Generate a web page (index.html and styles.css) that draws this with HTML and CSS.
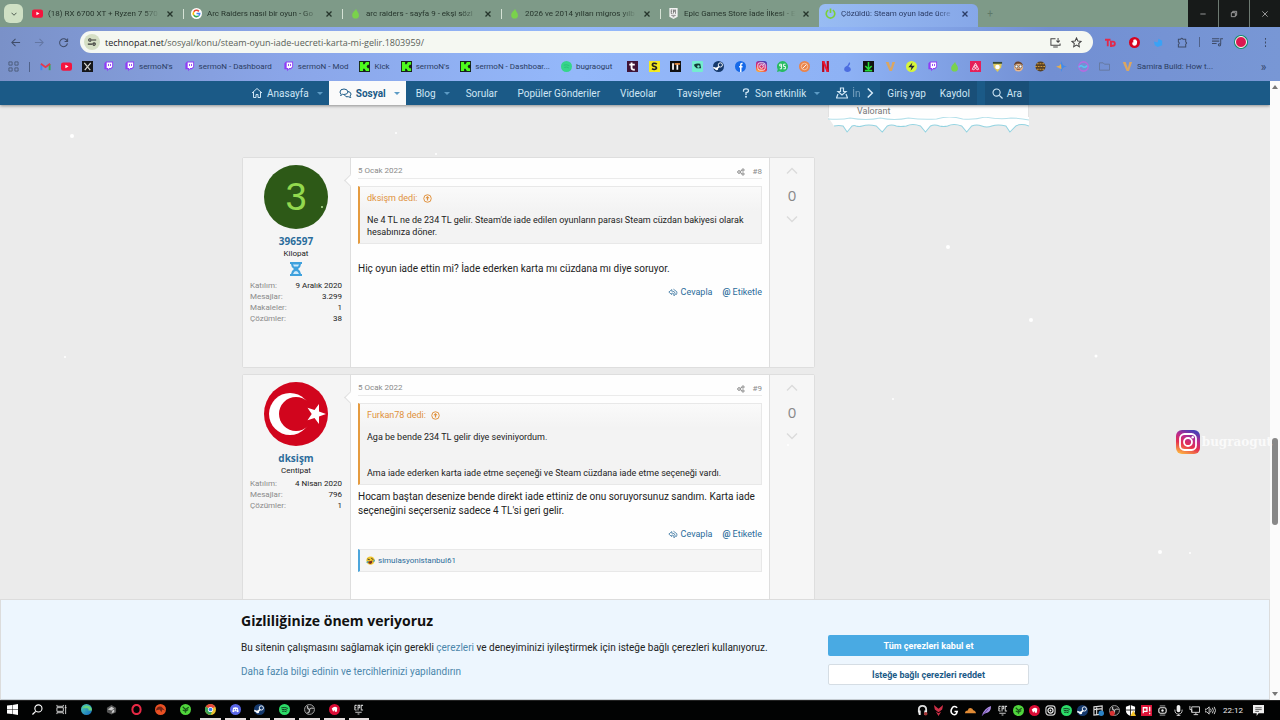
FILE: index.html
```html
<!DOCTYPE html>
<html lang="tr">
<head>
  <meta charset="UTF-8" />
  <meta name="viewport" content="width=device-width, initial-scale=1.0"/>
  <title>Çözüldü: Steam oyun iade ücreti karta mı gelir?</title>
  <link rel="stylesheet" href="styles.css">
</head>
<body>
  <svg class="sprite" aria-hidden="true">
    <defs>
      <linearGradient id="ig" x1="0.2" y1="1" x2="0.6" y2="0">
        <stop offset="0" stop-color="#fdb740"/><stop offset="0.4" stop-color="#e5304f"/><stop offset="0.7" stop-color="#b92a8f"/><stop offset="1" stop-color="#4a3fb5"/>
      </linearGradient>
      <linearGradient id="edgeFill" x1="0" y1="0" x2="1" y2="1">
        <stop offset="0" stop-color="#4fd0b5"/><stop offset="1" stop-color="#1268c4"/>
      </linearGradient>
    </defs>
    <symbol id="close" viewBox="0 0 12 12"><path d="M3 3l6 6M9 3l-6 6" fill="none" stroke="currentColor" stroke-width="1.6"/></symbol>
    <symbol id="youtube" viewBox="0 0 12 12"><rect y="1.5" width="12" height="9" rx="2.4" fill="#f5143d"/><path d="M4.8 4v4l3.4-2z" fill="#fff"/></symbol>
    <symbol id="google" viewBox="0 0 12 12"><circle cx="6" cy="6" r="6" fill="#fff"/><g fill="none" stroke-width="1.7"><path d="M8.6 3.7A3.5 3.5 0 0 0 3 4.2" stroke="#ea4335"/><path d="M3 4.2a3.5 3.5 0 0 0 0 3.6" stroke="#fbbc05"/><path d="M3 7.8a3.5 3.5 0 0 0 5.4.6" stroke="#34a853"/><path d="M8.4 8.4A3.4 3.4 0 0 0 9.5 6H6" stroke="#4285f4"/></g></symbol>
    <symbol id="drop" viewBox="0 0 12 12"><path d="M6.6.8C5.8 3 2.4 4.6 2.4 7.8a3.7 3.7 0 0 0 7.4 0C9.800 5 7.200 3.800 6.600.8z" fill="#7ad24c"/></symbol>
    <symbol id="epic" viewBox="0 0 12 12"><path d="M1.500 0h9v9.500L6 12 1.500 9.500z" fill="#f2f2f2"/><path d="M3.500 2v4M3.500 2h1.300M3.500 4h1M3.500 6h1.300M6 6V2h1v2H6M8.700 2H8.200v4h.5M3.500 8h5M5 9.500h2" fill="none" stroke="#555" stroke-width=".7"/></symbol>
    <symbol id="epic-dark" viewBox="0 0 12 12"><path d="M2 1.500v5M2 1.500h2M2 4h1.500M2 6.500h2M5.500 7V1.500h1.800v2.700H5.500M11 1.500H9v5h2M2.500 9h7M5 11h2" fill="none" stroke="#ccc" stroke-width="1.100"/></symbol>
    <symbol id="power" viewBox="0 0 12 12"><path d="M3.500 2.300a4.700 4.700 0 1 0 5 0M6 .5v5" fill="none" stroke="#7ad03a" stroke-width="1.800"/></symbol>
    <symbol id="twitch" viewBox="0 0 12 12"><path d="M1.500 2.500L3.500.5H11v6L8.500 9H6.500L4.500 11.200V9h-3z" fill="#8f3df5"/><path d="M4 1.700h6v4.500L8.500 7.700H6.800L5.500 9V7.700H4z" fill="#fff"/><path d="M6 3.200v2.300M8.200 3.200v2.300" stroke="#8f3df5"/></symbol>
    <symbol id="kick" viewBox="0 0 12 12"><rect width="12" height="12" fill="#16201a"/><path d="M1 1h3.500v2.500H6L7.500 1H11v3H9.500L8.300 6l1.200 2H11v3H7.500L6 8.500H4.500V11H1z" fill="#4dfb1e"/></symbol>
    <symbol id="gmail" viewBox="0 0 12 12"><path d="M1.500 10V3.500" stroke="#4285f4" stroke-width="2"/><path d="M10.500 10V3.500" stroke="#34a853" stroke-width="2"/><path d="M1 3l5 3.700L11 3" fill="none" stroke="#e5384a" stroke-width="2"/></symbol>
    <symbol id="xapp" viewBox="0 0 12 12"><rect width="12" height="12" fill="#15161a"/><path d="M2.500 2l6.500 8M9.500 2L3 10" stroke="#ddd" stroke-width="1.300"/><path d="M3.500 2l6 8" stroke="#886" stroke-width=".5"/></symbol>
    <symbol id="steam" viewBox="0 0 12 12"><circle cx="6" cy="6" r="6" fill="#15396d"/><path d="M.3 7L4 8.600 7.500 5" fill="none" stroke="#fff" stroke-width="1.800"/><circle cx="8" cy="4.300" r="2.300" fill="#15396d" stroke="#fff"/><circle cx="4" cy="8.600" r="1.600" fill="#fff"/></symbol>
    <symbol id="facebook" viewBox="0 0 12 12"><circle cx="6" cy="6" r="6" fill="#1669e8"/><path d="M8.300 2.700H7.500q-1.200 0-1.200 1.300v8M4.500 6.300h3.700" fill="none" stroke="#fff" stroke-width="1.600"/></symbol>
    <symbol id="instagram" viewBox="0 0 24 24"><rect width="24" height="24" rx="6" fill="url(#ig)"/><rect x="4" y="4" width="16" height="16" rx="4.500" fill="none" stroke="#fff" stroke-width="1.800"/><circle cx="12" cy="12" r="4" fill="none" stroke="#fff" stroke-width="1.800"/><circle cx="16.700" cy="7.300" r="1.200" fill="#fff"/></symbol>
    <symbol id="spotify" viewBox="0 0 12 12"><circle cx="6" cy="6" r="6" fill="#2cdc68"/><path d="M2.500 4.200q4-1.200 7.200.6M3 6.200q3.400-1 6 .6M3.400 8q2.600-.7 4.800.5" fill="none" stroke="#12331e"/></symbol>
    <symbol id="vee" viewBox="0 0 12 12"><path d="M.8 1H4l2.400 7L8 1h3L7.600 11H5z" fill="#dba661"/></symbol>
    <symbol id="folder" viewBox="0 0 12 12"><path d="M.5 10V2h4L6 3.500h5.500V10z" fill="none" stroke="#65779c"/></symbol>
    <symbol id="netflix" viewBox="0 0 12 12"><path d="M3.500 12V0M8.500 12V0" stroke="#b5081c" stroke-width="2.400"/><path d="M2.300 0h2.400l5 12H7.300z" fill="#ef1430"/></symbol>
    <symbol id="stop" viewBox="0 0 12 12"><circle cx="6" cy="6" r="6" fill="#d8031f"/><path d="M3.500 6q0 3.500 2.500 3.500T8.800 6V4H8V3H7V2.500H6V3H4.700v3z" fill="#fff"/></symbol>
    <symbol id="amd" viewBox="0 0 12 12"><circle cx="6" cy="6" r="6" fill="#db0b35"/><path d="M3 5q3-3.500 6-1l-.5 4.500H6.500L6 6.500 4.500 8.500z" fill="#fff"/></symbol>
    <symbol id="razer" viewBox="0 0 12 12"><circle cx="6" cy="6" r="6" fill="#50d63c"/><path d="M6 9.500V6L3 3M6 6l3.500-2.500M3 6.500L6 8l3-2" fill="none" stroke="#185318" stroke-width="1.300"/></symbol>
    <symbol id="obs" viewBox="0 0 12 12"><circle cx="6" cy="6" r="5.400" fill="#171717" stroke="#aaa"/><path d="M6 6Q3 5 4 2M6 6q2-2.600 4.500-1M6 6q.500 3-2.500 4" fill="none" stroke="#bbb" stroke-width="1.200"/></symbol>
    <symbol id="home" viewBox="0 0 24 24"><path d="M2 12L12 3l10 9M5 10v11h5v-6h4v6h5V10" fill="none" stroke="currentColor" stroke-width="2"/></symbol>
    <symbol id="chat" viewBox="0 0 26 22"><path d="M3 16q2-2 1-3-2-2-2-4 0-6 8-6 7 0 8 6-1 5-8 5-2 0-3-.5Q5 16 3 16zM18 8q6 1 6 5 0 2-2 4 0 2 1.500 3-3 0-4.500-1.500Q13 20 11 15" fill="none" stroke="currentColor" stroke-width="2"/></symbol>
    <symbol id="search" viewBox="0 0 12 12"><circle cx="5" cy="5" r="3.900" fill="none" stroke="currentColor" stroke-width="1.200"/><path d="M8 8l3.500 3.500" stroke="currentColor" stroke-width="1.400"/></symbol>
    <symbol id="up" viewBox="0 0 12 12"><path d="M1 8.500l5-5 5 5" fill="none" stroke="currentColor" stroke-width="1.500"/></symbol>
    <symbol id="down" viewBox="0 0 12 12"><path d="M1 3.500l5 5 5-5" fill="none" stroke="currentColor" stroke-width="1.500"/></symbol>
    <symbol id="jump" viewBox="0 0 12 12"><circle cx="6" cy="6" r="5" fill="none" stroke="currentColor" stroke-width="1.300"/><path d="M6 2.800l2.800 3H6.800v2.800H5.200V5.800H3.200z" fill="currentColor"/></symbol>
    <symbol id="share" viewBox="0 0 12 12"><g fill="none" stroke="currentColor" stroke-width="1.500"><circle cx="3" cy="6" r="2"/><circle cx="9" cy="3" r="1.700"/><circle cx="9" cy="9" r="1.700"/><path d="M4.700 5l2.700-1.300M4.700 7l2.700 1.300"/></g></symbol>
    <symbol id="reply" viewBox="0 0 24 20"><path d="M9 3L2 9l7 6v-3.500h2q4 0 3.500 6.500 3.500-2.500 2.500-6-1-5-6-5H9zM13 2l8 6q2 3-2 8" fill="none" stroke="currentColor" stroke-width="1.800"/></symbol>
  </svg>

  <header class="browser">
    <div class="tab-strip">
      <button class="tab-search" aria-label="Sekme ara"><svg viewBox="0 0 12 12"><use href="#down"/></svg></button>
      <nav class="tabs">
        <div class="tab"><svg><use href="#youtube"/></svg><span>(18) RX 6700 XT + Ryzen 7 570</span><button aria-label="Kapat"><svg><use href="#close"/></svg></button></div>
        <div class="tab"><svg><use href="#google"/></svg><span>Arc Raiders nasıl bir oyun - Go</span><button aria-label="Kapat"><svg><use href="#close"/></svg></button></div>
        <div class="tab"><svg><use href="#drop"/></svg><span>arc raiders - sayfa 9 - ekşi sözl</span><button aria-label="Kapat"><svg><use href="#close"/></svg></button></div>
        <div class="tab"><svg><use href="#drop"/></svg><span>2026 ve 2014 yılları migros yılb</span><button aria-label="Kapat"><svg><use href="#close"/></svg></button></div>
        <div class="tab"><svg><use href="#epic"/></svg><span>Epic Games Store İade İlkesi - E</span><button aria-label="Kapat"><svg><use href="#close"/></svg></button></div>
        <div class="tab active"><svg><use href="#power"/></svg><span>Çözüldü: Steam oyun iade ücre</span><button aria-label="Kapat"><svg><use href="#close"/></svg></button></div>
        <button class="new-tab" aria-label="Yeni sekme">+</button>
      </nav>
      <div class="window-buttons">
        <button aria-label="Simge durumuna küçült"><svg viewBox="0 0 12 12"><path d="M2 6h8"/></svg></button>
        <button aria-label="Geri yükle"><svg viewBox="0 0 12 12"><path d="M2 4h6v6H2zM4 4V2h6v6H8"/></svg></button>
        <button aria-label="Pencereyi kapat"><svg viewBox="0 0 12 12"><path d="M2 2l8 8M10 2l-8 8"/></svg></button>
      </div>
    </div>

    <div class="toolbar">
      <button class="tool" aria-label="Geri"><svg viewBox="0 0 12 12"><path d="M11 6H2M6 2L2 6l4 4"/></svg></button>
      <button class="tool faded" aria-label="İleri"><svg viewBox="0 0 12 12"><path d="M1 6h9M6 2l4 4-4 4"/></svg></button>
      <button class="tool" aria-label="Yenile"><svg viewBox="0 0 12 12"><path d="M10 4.500A4.300 4.300 0 1 0 10.300 7M10.500 1.500v3.300H7.200"/></svg></button>
      <div class="address">
        <button class="site-info" aria-label="Site bilgileri"><svg viewBox="0 0 12 12"><circle cx="3.500" cy="3.500" r="1.500"/><path d="M6 3.500h5M1 8.500h5"/><circle cx="8.500" cy="8.500" r="1.500"/></svg></button>
        <a class="url" href="#"><b>technopat.net</b>/sosyal/konu/steam-oyun-iade-uecreti-karta-mi-gelir.1803959/</a>
        <button class="tool" aria-label="Yükle"><svg viewBox="0 0 12 12"><path d="M6 2H1v7h10V7M3.500 11h5M8.800 1v4.500M7 4l1.800 1.800L10.700 4"/></svg></button>
        <button class="tool" aria-label="Yer işareti"><svg viewBox="0 0 12 12"><path d="M6 1l1.500 3.300 3.500.4-2.600 2.400.7 3.600L6 8.900l-3.100 1.800.7-3.600L1 4.700l3.500-.4z"/></svg></button>
      </div>
      <div class="extensions">
        <button class="tool" aria-label="Technopat"><svg viewBox="0 0 12 12"><path d="M0 3h6M3 3v7M6.500 11V5h2a2.200 2.200 0 0 1 0 4.500h-2" stroke="#e2294a" stroke-width="2"/></svg></button>
        <button class="tool" aria-label="Engelleyici"><svg><use href="#stop" stroke="none"/></svg></button>
        <button class="tool" aria-label="Eklenti"><svg viewBox="0 0 12 12"><path d="M1 5l4 1 1-4 4 2v5l-5 2-3-2z" fill="#3aa2f5" stroke="none"/></svg></button>
        <button class="tool" aria-label="Uzantılar"><svg viewBox="0 0 12 12"><path d="M1.500 2.500H4q1.200-2.500 2.500 0H9.500v3q2 1 0 2.300v3h-8V8q2-1.300 0-2.500z"/></svg></button>
        <span class="divider"></span>
        <button class="tool" aria-label="Medya"><svg viewBox="0 0 12 12"><path d="M0 2h8M0 4.500h8M0 7h5M9.500 8V2H12"/><circle cx="8.200" cy="8.500" r="1.200"/></svg></button>
        <button class="profile" aria-label="Profil"></button>
        <button class="tool" aria-label="Menü"><svg viewBox="0 0 12 12"><path d="M6 1v2M6 5v2M6 9v2"/></svg></button>
      </div>
    </div>

    <nav class="bookmarks">
      <a href="#" aria-label="Uygulamalar"><svg viewBox="0 0 12 12"><path d="M1 1h3.500v3.500H1zM7.500 1H11v3.500H7.500zM1 7.500h3.500V11H1zM7.500 7.500H11V11H7.500z" fill="none" stroke="#4c5c79"/></svg></a>
      <span class="divider"></span>
      <a href="#" aria-label="Gmail"><svg><use href="#gmail"/></svg></a>
      <a href="#" aria-label="YouTube"><svg><use href="#youtube"/></svg></a>
      <a href="#" aria-label="X"><svg><use href="#xapp"/></svg></a>
      <a href="#" aria-label="Twitch"><svg><use href="#twitch"/></svg></a>
      <a class="named" href="#"><svg><use href="#twitch"/></svg>sermoN's</a>
      <a class="named" href="#"><svg><use href="#twitch"/></svg>sermoN - Dashboard</a>
      <a class="named" href="#"><svg><use href="#twitch"/></svg>sermoN - Mod</a>
      <a class="named" href="#"><svg><use href="#kick"/></svg>Kick</a>
      <a class="named" href="#"><svg><use href="#kick"/></svg>sermoN's</a>
      <a class="named" href="#"><svg><use href="#kick"/></svg>sermoN - Dashboar...</a>
      <a class="named" href="#"><svg viewBox="0 0 12 12"><circle cx="6" cy="6" r="6" fill="#35d58a"/><path d="M3 4.500q3-1 6 .5M3.500 7q3-1 5 .5" stroke="#28bd77" fill="none"/></svg>bugraogut</a>
      <div class="bookmark-icons">
        <a href="#" aria-label="t"><svg viewBox="0 0 12 12"><rect width="12" height="12" fill="#401437"/><path d="M5 1.500v6q0 2 3.500 2M2.500 4h6" fill="none" stroke="#fff" stroke-width="2"/></svg></a>
        <a href="#" aria-label="S"><svg viewBox="0 0 12 12"><rect width="12" height="12" fill="#f4ea20"/><path d="M8.500 3.500Q7 2 5 2.600T4 5q1 .8 2.500 1 2 .6 1.500 2.400Q5.500 10.200 3.300 8.300" fill="none" stroke="#222" stroke-width="1.800"/></svg></a>
        <a href="#" aria-label="IT"><svg viewBox="0 0 12 12"><rect width="12" height="12" fill="#111"/><path d="M3.300 2.500v7M8 3v6.500" stroke="#fff" stroke-width="1.900"/><path d="M5 3.200h6" stroke="#f09040" stroke-width="1.800"/></svg></a>
        <a href="#" aria-label="Harita"><svg viewBox="0 0 12 12"><rect width="12" height="12" rx="1" fill="#74edcf"/><path d="M2 4q3-2 7-1l1 5H5L3 6z" fill="#123b36"/><circle cx="7" cy="6" r="1.300" fill="#74edcf"/></svg></a>
        <a href="#" aria-label="Steam"><svg><use href="#steam"/></svg></a>
        <a href="#" aria-label="Facebook"><svg><use href="#facebook"/></svg></a>
        <a href="#" aria-label="Instagram"><svg><use href="#instagram"/></svg></a>
        <a href="#" aria-label="95"><svg viewBox="0 0 12 12"><path d="M6 0a6 6 0 1 1-3 11.200L0 12l.8-3A6 6 0 0 1 6 0z" fill="#27bb62"/><path d="M5 5.500H3V3.500h2v5H3M9.300 3.500H7.200V6h2v2.500H7" fill="none" stroke="#fff"/></svg></a>
        <a href="#" aria-label="Turuncu"><svg viewBox="0 0 12 12"><circle cx="6" cy="6" r="6" fill="#e9854d"/><circle cx="6" cy="6" r="3.500" fill="none" stroke="#f8c9a6"/><path d="M4 8l4-4" stroke="#fff"/></svg></a>
        <a href="#" aria-label="Netflix"><svg><use href="#netflix"/></svg></a>
        <a href="#" aria-label="Mavi"><svg viewBox="0 0 12 12"><path d="M6 5l2-4 1 2-2 3q4 2 2 5Q6 13 3 11 1 7 5 5.500z" fill="#4c6de0"/></svg></a>
        <a href="#" aria-label="İndir"><svg viewBox="0 0 12 12"><rect width="12" height="12" fill="#111"/><path d="M6 1v8M2.500 5.500L6 9l3.500-3.500M2 10.500h8" fill="none" stroke="#25dc38" stroke-width="1.700"/></svg></a>
        <a href="#" aria-label="V"><svg><use href="#vee"/></svg></a>
        <a href="#" aria-label="Şimşek"><svg viewBox="0 0 12 12"><circle cx="6" cy="6" r="6" fill="#d7f63b"/><path d="M7 1.500L2.500 6.800H6L5 10.500l4.500-5.300H6z" fill="#223"/></svg></a>
        <a href="#" aria-label="Twitch"><svg><use href="#twitch"/></svg></a>
        <a href="#" aria-label="Ekşi"><svg><use href="#drop"/></svg></a>
        <a href="#" aria-label="Airbnb"><svg viewBox="0 0 12 12"><rect width="12" height="12" fill="#e52059"/><path d="M6 2.500L2.500 9Q4 10.500 6 8q2 2.500 3.500 1zM6 8Q3.500 5 6 5t0 3" fill="none" stroke="#fff" stroke-width=".9"/></svg></a>
        <a href="#" aria-label="Kalkan"><svg viewBox="0 0 12 12"><path d="M1 1h10L10 7l-4 5-4-5z" fill="#dfc95a"/><path d="M1 1h10v2H1z" fill="#33483a"/><circle cx="6" cy="6.500" r="2.500" fill="#fff"/></svg></a>
        <a href="#" aria-label="Yüz"><svg viewBox="0 0 12 12"><circle cx="6" cy="6.500" r="5" fill="#e8b78c"/><path d="M1 5q1-5 5-4.500T11 5L8 3H4z" fill="#684129"/><circle cx="3.800" cy="6" r="1.600" fill="#fff" stroke="#333" stroke-width=".6"/><circle cx="8.200" cy="6" r="1.600" fill="#fff" stroke="#333" stroke-width=".6"/><path d="M4 9h4" stroke="#7c3f21"/></svg></a>
        <a href="#" aria-label="Oyun"><svg viewBox="0 0 12 12"><circle cx="6" cy="6" r="5.500" fill="#584023"/><path d="M0 6h12M2 3h8M2 9h8" stroke="#d09a3d" stroke-width="1.200" stroke-dasharray="2 1"/></svg></a>
        <a href="#" aria-label="Gemini"><svg viewBox="0 0 12 12"><path d="M6 0q.5 5.500 6 6-5.500.5-6 6-.5-5.500-6-6 5.500-.5 6-6z" fill="#428bea"/><path d="M0 6q4-.3 5.500-3L6 9z" fill="#e4ad54"/></svg></a>
        <a href="#" aria-label="Dalga"><svg viewBox="0 0 12 12"><circle cx="6" cy="6" r="5" fill="none" stroke="#b46ce0" stroke-width="1.800"/><path d="M1 7q2-3 4-1t5-1" fill="none" stroke="#58c4f2" stroke-width="1.800"/></svg></a>
        <a href="#" aria-label="Klasör"><svg><use href="#folder"/></svg></a>
      </div>
      <a class="named last" href="#"><svg><use href="#vee"/></svg>Samira Build: How t...</a>
      <button class="more" aria-label="Diğer yer işaretleri">»</button>
    </nav>
  </header>

  <div class="viewport">
    <div class="page">
      <nav class="site-nav">
        <div class="site-nav-inner">
          <a class="with-arrow" href="#"><svg><use href="#home"/></svg>Anasayfa<i class="caret"></i></a>
          <a class="current" href="#"><svg class="wide"><use href="#chat"/></svg>Sosyal<i class="caret"></i></a>
          <a class="with-arrow" href="#">Blog<i class="caret"></i></a>
          <a href="#">Sorular</a>
          <a href="#">Popüler Gönderiler</a>
          <a href="#">Videolar</a>
          <a href="#">Tavsiyeler</a>
          <a class="with-arrow events" href="#"><svg viewBox="0 0 12 12"><path d="M3 4.500V3q0-2 3-2t3 2.200Q9 5 6 5.500V8.500" fill="none" stroke="currentColor" stroke-width="1.500"/><circle cx="6" cy="10.500" r="1.200" fill="currentColor"/></svg>Son etkinlik<i class="caret"></i></a>
          <a class="cut" href="#"><svg viewBox="0 0 12 12"><path d="M4.500 1h3v3.500H10L6 8 2 4.500h2.500zM2 7l-1.500 4h11L10 7" fill="none" stroke="currentColor" stroke-width="1.200"/></svg><span>İn</span></a>
          <button class="scroll-nav" aria-label="Sonraki"><svg viewBox="0 0 12 12"><path d="M3 1l5 5-5 5"/></svg></button>
          <div class="account">
            <a href="#">Giriş yap</a>
            <a href="#">Kaydol</a>
          </div>
          <a class="search" href="#"><svg><use href="#search"/></svg>Ara</a>
        </div>
      </nav>

      <main class="content">
        <div class="posts">
          <article class="post">
            <aside class="user">
              <svg class="avatar" viewBox="0 0 64 64"><circle cx="32" cy="32" r="32" fill="#2d5917"/><text class="avatar-letter" x="32" y="45" text-anchor="middle">3</text></svg>
              <a class="username" href="#">396597</a>
              <span class="rank">Kilopat</span>
              <svg class="badge-icon" viewBox="0 0 12 14"><path d="M0 0h12v2h-1q0 3-3 5 3 2 3 5h1v2H0v-2h1q0-3 3-5-3-2-3-5H0z" fill="#3fa1dd"/><path d="M3 2.500h6L8 4.500H4zM3 12q1-3 3-3t3 3z" fill="#cfeafb"/></svg>
              <dl>
                <div><dt>Katılım:</dt><dd>9 Aralık 2020</dd></div>
                <div><dt>Mesajlar:</dt><dd>3.299</dd></div>
                <div><dt>Makaleler:</dt><dd>1</dd></div>
                <div><dt>Çözümler:</dt><dd>38</dd></div>
              </dl>
            </aside>
            <section class="message">
              <div class="message-head"><time>5 Ocak 2022</time><span><svg><use href="#share"/></svg><a href="#">#8</a></span></div>
              <blockquote>
                <a class="quote-author" href="#">dksişm dedi: <svg><use href="#jump"/></svg></a>
                <p>Ne 4 TL ne de 234 TL gelir. Steam'de iade edilen oyunların parası Steam cüzdan bakiyesi olarak hesabınıza döner.</p>
              </blockquote>
              <p class="message-text spaced">Hiç oyun iade ettin mi? İade ederken karta mı cüzdana mı diye soruyor.</p>
              <div class="actions"><a href="#"><svg><use href="#reply"/></svg>Cevapla</a><a class="tag" href="#"><b>@</b>Etiketle</a></div>
            </section>
            <div class="votes"><button aria-label="Yukarı oy"><svg><use href="#up"/></svg></button><span>0</span><button aria-label="Aşağı oy"><svg><use href="#down"/></svg></button></div>
          </article>

          <article class="post">
            <aside class="user">
              <svg class="avatar" viewBox="0 0 64 64"><circle cx="32" cy="32" r="32" fill="#d1051d"/><circle cx="26" cy="32" r="21" fill="#fff"/><circle cx="32" cy="32" r="17" fill="#d1051d"/><path d="M62 32l-7 2.400v7.600l-4.500-6-7 2.200 4.200-6.200-4.200-6.200 7 2.200 4.500-6v7.600z" fill="#fff"/></svg>
              <a class="username" href="#">dksişm</a>
              <span class="rank">Centipat</span>
              <dl>
                <div><dt>Katılım:</dt><dd>4 Nisan 2020</dd></div>
                <div><dt>Mesajlar:</dt><dd>796</dd></div>
                <div><dt>Çözümler:</dt><dd>1</dd></div>
              </dl>
            </aside>
            <section class="message">
              <div class="message-head"><time>5 Ocak 2022</time><span><svg><use href="#share"/></svg><a href="#">#9</a></span></div>
              <blockquote>
                <a class="quote-author" href="#">Furkan78 dedi: <svg><use href="#jump"/></svg></a>
                <p>Aga be bende 234 TL gelir diye seviniyordum.<br><br><br>Ama iade ederken karta iade etme seçeneği ve Steam cüzdana iade etme seçeneği vardı.</p>
              </blockquote>
              <p class="message-text">Hocam baştan desenize bende direkt iade ettiniz de onu soruyorsunuz sandım. Karta iade seçeneğini seçerseniz sadece 4 TL'si geri gelir.</p>
              <div class="actions"><a href="#"><svg><use href="#reply"/></svg>Cevapla</a><a class="tag" href="#"><b>@</b>Etiketle</a></div>
              <div class="reactions"><svg viewBox="0 0 12 12"><circle cx="6" cy="6" r="5.500" fill="#f2c62d"/><path d="M2 4l3 1M7 3l3 2" stroke="#332" stroke-width="1.200"/><path d="M2.500 7.500l6-1.500Q9 9.500 6 10.500 3.500 10.500 2.500 7.500z" fill="#7c3022"/><path d="M1 9l2-2M10 8l1.500-3" stroke="#40a8b8" stroke-width="1.500"/></svg><a href="#">simulasyonistanbul61</a></div>
            </section>
            <div class="votes"><button aria-label="Yukarı oy"><svg><use href="#up"/></svg></button><span>0</span><button aria-label="Aşağı oy"><svg><use href="#down"/></svg></button></div>
          </article>
        </div>

        <aside class="sidebar">
          <div class="widget"><a href="#">Valorant</a></div>
          <svg class="icicles" viewBox="0 0 200 18" preserveAspectRatio="none"><path d="M0 0h200v9q-8-3-13 0l-6 6-4-6q-8-2-14 0-5 2-10 0-5-2-10 0l-5 6-5-6q-8-3-14 0-4 1-8 0-5-2-9 0l-5 6-5-6q-8-3-14 0-6 1-10 0-5-2-9 0l-5 6-6-6q-8-2-14 0-3 1-6 0-2-1-4 0l-5 6-4-6q-4-1-9 0z" fill="#fff"/><path d="M0 2q14 1 22-1 16 3 30 0 14 3 28 0 14 2 28 1 13-4 26 0 12 1 22-2 16 3 26 1 10 0 18 2" fill="none" stroke="#b4e0ea"/><path d="M200 9q-8-3-13 0l-6 6-4-6q-8-2-14 0-5 2-10 0-5-2-10 0l-5 6-5-6q-8-3-14 0-4 1-8 0-5-2-9 0l-5 6-5-6q-8-3-14 0-6 1-10 0-5-2-9 0l-5 6-6-6q-8-2-14 0-3 1-6 0-2-1-4 0l-5 6-4-6q-4-1-9 0" fill="none" stroke="#93d3e1"/></svg>
        </aside>
      </main>

      <section class="cookies">
        <div class="cookies-inner">
          <div class="cookies-text">
            <h2>Gizliliğinize önem veriyoruz</h2>
            <p>Bu sitenin çalışmasını sağlamak için gerekli <a href="#">çerezleri</a> ve deneyiminizi iyileştirmek için isteğe bağlı çerezleri kullanıyoruz.</p>
            <p><a href="#">Daha fazla bilgi edinin ve tercihlerinizi yapılandırın</a></p>
          </div>
          <div class="cookies-buttons">
            <button class="accept">Tüm çerezleri kabul et</button>
            <button class="reject">İsteğe bağlı çerezleri reddet</button>
          </div>
        </div>
      </section>

      <svg class="snow" aria-hidden="true"><g fill="#fff"><circle cx="72" cy="55" r="2"/><circle cx="396" cy="52" r="1"/><circle cx="436" cy="73" r="1"/><circle cx="948" cy="166" r="2"/><circle cx="1031" cy="239" r="2"/><circle cx="1096" cy="275" r="1.500"/><circle cx="893" cy="318" r="1"/><circle cx="1160" cy="471" r="2"/><circle cx="1190" cy="472" r="1"/><circle cx="65" cy="276" r="1"/><circle cx="788" cy="364" r="1"/><circle cx="322" cy="126" r="1" fill="#b9e69a"/></g></svg>
    </div>
    <div class="scrollbar" aria-hidden="true"><i class="scroll-up"></i><span class="space-above"></span><span class="thumb"></span><span class="space-below"></span><i class="scroll-down"></i></div>
    <div class="watermark"><svg><use href="#instagram"/></svg><span>bugraogut</span></div>
  </div>

  <footer class="taskbar">
    <div class="apps">
      <button aria-label="Başlat"><svg viewBox="0 0 12 12"><path d="M0 1.700L5.500 1v4.700H0zM6 1l6-1v5.700H6zM0 6.300h5.500V11L0 10.300zM6 6.300h6V12l-6-1z" fill="#fff"/></svg></button>
      <button aria-label="Ara"><svg viewBox="0 0 12 12"><circle cx="7" cy="4.800" r="3.900" fill="none" stroke="#fff" stroke-width="1.200"/><path d="M4 8L.5 11.500" stroke="#fff" stroke-width="1.400"/></svg></button>
      <button aria-label="Görev görünümü"><svg viewBox="0 0 12 12"><path d="M1 1v1.500h7V1M1 11V9.500h7V11M1 4h7v4H1zM10.500 1v10M9.500 4h2" fill="none" stroke="#ddd"/></svg></button>
      <button aria-label="Edge"><svg viewBox="0 0 12 12"><circle cx="6" cy="6" r="6" fill="url(#edgeFill)"/><path d="M4 7q0-3 3-2.500Q9 5 8 7h4q0-5-6-5.500Q2 2 1 6q2-3 4-1.500Q3 6 4 9z" fill="#68d47c"/></svg></button>
      <button aria-label="Uygulama"><svg viewBox="0 0 12 12"><path d="M6 1l5 3v5l-5 2.500L1 9V4z" fill="#555"/><path d="M6 3l3 2-3 2-4-1zM7 7l2-1v3l-3 1z" fill="#ccc"/></svg></button>
      <button aria-label="Opera GX"><svg viewBox="0 0 12 12"><ellipse cx="6" cy="6" rx="4.500" ry="5" fill="none" stroke="#e72945" stroke-width="2.200"/></svg></button>
      <button aria-label="Uygulama"><svg viewBox="0 0 12 12"><circle cx="6" cy="6" r="6" fill="#e95023"/><path d="M1 7q1-5 6-4l4 4-3-1-1 3-2-3z" fill="#732517"/></svg></button>
      <button aria-label="Razer"><svg><use href="#razer"/></svg></button>
      <button class="running" aria-label="Chrome"><svg viewBox="0 0 12 12"><circle cx="6" cy="6" r="6" fill="#eac132"/><path d="M6 6L.8 3a6 6 0 0 1 10.400 0z" fill="#e5483b"/><path d="M6 6L.8 3A6 6 0 0 0 6 12l2-4z" fill="#3aa657"/><circle cx="6" cy="6" r="2.800" fill="#fff"/><circle cx="6" cy="6" r="2" fill="#387ee8"/></svg></button>
      <button class="running" aria-label="Discord"><svg viewBox="0 0 12 12"><circle cx="6" cy="6" r="6" fill="#5966e8"/><path d="M2.500 8.500L3.500 4Q6 3 8.500 4l1 4.500L7.800 9l-.6-1H4.800L4 9z" fill="#fff"/><circle cx="4.800" cy="6.300" r=".8" fill="#5966e8"/><circle cx="7.200" cy="6.300" r=".8" fill="#5966e8"/></svg></button>
      <button class="running" aria-label="Steam"><svg><use href="#steam"/></svg></button>
      <button class="running" aria-label="Spotify"><svg><use href="#spotify"/></svg></button>
      <button class="running" aria-label="OBS"><svg><use href="#obs"/></svg></button>
      <button class="running" aria-label="AMD"><svg><use href="#amd"/></svg></button>
      <button class="running" aria-label="Epic Games"><svg><use href="#epic-dark"/></svg></button>
    </div>
    <div class="tray">
      <svg viewBox="0 0 12 12"><path d="M2 8V5Q2 1 6 1t4 4v3" fill="none" stroke="#ddd" stroke-width="2"/><path d="M1 6h3v5H2zM8 6h3l-1 5H8z" fill="#eee"/><circle cx="9.500" cy="9.500" r="2" fill="#a63535"/></svg>
      <svg viewBox="0 0 12 12"><path d="M1 0l5 4 5-4-1 5-4 3-4-3zM3 7l3 5 3-5-3 2z" fill="#cf3048"/></svg>
      <svg viewBox="0 0 12 12"><path d="M9 3Q5 0 3 4t1 6q4 2 5-3H6" fill="none" stroke="#fff" stroke-width="1.700"/></svg>
      <svg viewBox="0 0 12 12"><path d="M0 9q0-3 3-3 1-4 5-2 1 2 2 2 2 1 2 3z" fill="#e18b35"/></svg>
      <svg viewBox="0 0 12 12"><path d="M1 11Q4 3 11 1 11 8 5 9z" fill="#a98ae0"/><path d="M1 12l7-8" stroke="#5c3b93"/></svg>
      <svg><use href="#epic-dark"/></svg>
      <svg><use href="#razer"/></svg>
      <svg><use href="#amd"/></svg>
      <svg viewBox="0 0 12 12"><rect x="1" y="1" width="10" height="10" rx="3" fill="none" stroke="#ccc" stroke-width="1.300"/><circle cx="6" cy="6" r="2.800" fill="none" stroke="#eee" stroke-width="1.300"/><circle cx="6" cy="6" r="1" fill="#eee"/></svg>
      <svg><use href="#spotify"/></svg>
      <svg><use href="#steam"/></svg>
      <svg viewBox="0 0 12 12"><path d="M1 2l9-1v9l-9 1zM1 5l9-1M4 2v8" fill="none" stroke="#ddd" stroke-width="1.200"/><circle cx="9" cy="9" r="3" fill="#2b83c7"/></svg>
      <svg viewBox="0 0 12 12"><use href="#obs"/><circle cx="3.500" cy="9" r="2.800" fill="#d93434"/></svg>
      <svg viewBox="0 0 12 12"><path d="M6 0l5 2v4q0 4-5 6-5-2-5-6V2z" fill="#fff"/><path d="M6 0v12M1 5.500h10" stroke="#222"/><path d="M9 6l3 6H6z" fill="#f5c428"/></svg>
      <svg viewBox="0 0 12 12"><rect width="12" height="12" fill="#dd1438"/><path d="M2.500 9V3h4v4h-4M9.500 2v5M9.500 8.500v1.500" fill="none" stroke="#fff" stroke-width="1.400"/></svg>
      <svg viewBox="0 0 12 12"><path d="M3 1h6M3 11h6" stroke="#aaa"/><rect x="2" y="3" width="8" height="6" rx="2" fill="none" stroke="#eee" stroke-width="1.200"/><circle cx="6" cy="6" r="1.300" fill="#eee"/></svg>
      <svg viewBox="0 0 12 12"><rect x="4" width="4" height="8" rx="2" fill="#eee"/><path d="M2 5q0 5 4 5t4-5M6 10v2M4 11.500h4" fill="none" stroke="#ccc"/></svg>
      <svg viewBox="0 0 12 12"><path d="M3 2h8.500v6H3zM5 10.500h5M7.500 8v2.500M1 1v4h2v3" fill="none" stroke="#ddd"/></svg>
      <svg viewBox="0 0 12 12"><path d="M0 4.500h2L4.500 2v8L2 7.500H0zM6 4q1.500 2 0 4M8 3q2.300 3 0 6M10 2q3 4 0 8" fill="none" stroke="#ddd"/></svg>
      <time>22:12</time>
      <svg class="notification" viewBox="0 0 12 12"><path d="M0 0h12v9H6l-2 3V9H0z" fill="#eee"/><path d="M2.500 3h7M2.500 5h7M2.500 7h4" stroke="#333" stroke-width=".8"/></svg>
    </div>
  </footer>
</body>
</html>
```
FILE: styles.css
```css
* { margin: 0; padding: 0; box-sizing: border-box; }

html, body {
  height: 100%;
  overflow: hidden;
  font-family: Roboto, "Noto Sans", sans-serif;
}

body {
  display: flex;
  flex-direction: column;
  background: #ebebeb;
  color: #222;
  font-size: 9px;
}

a { color: #2b6c9b; text-decoration: none; }
button { border: none; background: none; font-family: inherit; color: inherit; cursor: pointer; }
svg { flex: none; width: 12px; height: 12px; }
.sprite { position: absolute; width: 0; height: 0; }

/* browser window */
.browser {
  flex: none;
  background: linear-gradient(90deg, #7a91c8 0%, #8aa5e8 22%, #94b8fa 45%, #8eb2f5 66%, #728fd3 82%, #7897d5 100%);
}

.tab-strip {
  display: flex;
  height: 27px;
  background: #7e9a88;
}

.tab-search {
  width: 19px;
  height: 19px;
  margin: 4px 1px 0 4px;
  border-radius: 6px;
  background: #cfe0c4;
}
.tab-search svg { width: 6px; height: 6px; display: block; margin: auto; color: #26332b; }

.tabs { flex: 1; display: flex; min-width: 0; }

.tab {
  flex: 0 1 159px;
  min-width: 0;
  display: flex;
  align-items: center;
  gap: 5px;
  padding: 0 8px;
  font-size: 8px;
  color: #26352c;
  position: relative;
}
.tab svg { width: 11px; height: 11px; }
.tab span {
  flex: 1;
  white-space: nowrap;
  overflow: hidden;
  -webkit-mask-image: linear-gradient(90deg, #000 85%, transparent);
  mask-image: linear-gradient(90deg, #000 85%, transparent);
}
.tab button { display: flex; }
.tab button svg { width: 10px; height: 10px; }
.tab + .tab:not(.active)::before {
  content: "";
  width: 1px;
  height: 10px;
  background: #d5e2d5;
  position: absolute;
  left: 0;
}
.tab.active {
  margin-top: 4px;
  padding: 0 8px 4px 6px;
  border-radius: 6px 6px 0 0;
  background: linear-gradient(90deg, #98bcf3, #86a7e8);
  color: #2b3c66;
}

.new-tab { width: 24px; color: #5e7968; font-size: 10px; }

.window-buttons { display: flex; gap: 1px; background: #6d7a72; }
.window-buttons button { width: 30px; background: #171a19; }
.window-buttons svg { width: 8px; height: 8px; fill: none; stroke: #b5b5b5; stroke-width: 1.2; }

.toolbar {
  display: flex;
  align-items: center;
  height: 30px;
  padding: 0 3px;
}
.tool { display: flex; justify-content: center; width: 24px; color: #3f4c68; }
.tool svg { width: 11px; height: 11px; fill: none; stroke: currentColor; stroke-width: 1.1; }
.tool.faded { opacity: 0.4; }

.address {
  flex: 1;
  display: flex;
  align-items: center;
  height: 22px;
  margin-left: 5px;
  padding: 0 6px 0 4px;
  border-radius: 11px;
  background: #f5f8f2;
}
.site-info {
  width: 16px;
  height: 16px;
  border-radius: 50%;
  background: #d5dfc5;
}
.site-info svg { display: block; margin: auto; width: 10px; height: 10px; fill: none; stroke: #333; stroke-width: 1.3; }
.url { flex: 1; margin-left: 5px; font-family: "Open Sans", sans-serif; font-size: 9px; color: #596058; }
.url b { font-weight: 400; color: #1d221e; }
.address .tool { color: #444; width: 21px; }

.extensions { display: flex; align-items: center; margin-left: 5px; }
.divider { width: 1px; height: 10px; background: #50628a; }
.extensions .divider { margin: 0 5px; }
.profile {
  width: 12px;
  height: 12px;
  margin: 0 6px;
  border: 1px solid #fff;
  border-radius: 50%;
  background: #dc1750;
  box-shadow: 0 0 0 1px #128e66;
}

.bookmarks {
  display: flex;
  align-items: center;
  gap: 10px;
  height: 24px;
  padding: 0 8px 5px;
  font-size: 8px;
}
.bookmarks a { display: flex; align-items: center; gap: 4px; color: #2b3d63; white-space: nowrap; }
.bookmarks svg { width: 11px; height: 11px; }
.bookmarks .named { margin-right: 1px; }
.bookmark-icons { flex: 1; display: flex; justify-content: space-between; padding-left: 4px; }
.bookmarks .last { margin: 0 32px 0 2px; }
.more { width: 17px; font-size: 12px; color: #35466b; }

/* site */
.viewport { flex: 1; display: flex; min-height: 0; position: relative; }
.page { flex: 1; min-width: 0; display: flex; flex-direction: column; position: relative; overflow: hidden; }

.site-nav {
  flex: none;
  background: #1b5a87;
  box-shadow: 0 1px 3px rgba(0, 0, 0, 0.4);
  z-index: 1;
}
.site-nav-inner {
  display: flex;
  width: 788px;
  max-width: 100%;
  height: 24px;
  margin: 0 auto;
  font-size: 10px;
}
.site-nav a {
  display: flex;
  align-items: center;
  gap: 4px;
  padding: 0 10px;
  color: #cfe6f5;
  white-space: nowrap;
}
.site-nav .wide { width: 13px; }
.caret {
  margin-left: 4px;
  border: 3px solid transparent;
  border-top-color: #5d9bc5;
  border-bottom: 0;
}
.site-nav .with-arrow { padding-right: 6px; }
.site-nav .current { padding-right: 6px; background: #fafafa; color: #1b5a87; font-weight: 700; }
.site-nav .events svg { width: 10px; }
.site-nav .cut { padding: 0; margin-left: 10px; }
.cut span { opacity: 0.5; }
.scroll-nav { display: flex; align-items: center; justify-content: center; width: 22px; }
.scroll-nav svg { width: 11px; fill: none; stroke: #d9edfa; stroke-width: 1.6; }
.account { display: flex; background: #194f78; margin: 0 8px 0 auto; }
.site-nav .account a { padding: 0 7px; }
.site-nav .search { padding: 0 7px; background: #194f78; }
.search svg { width: 11px; height: 11px; }

.content {
  flex: 1;
  min-height: 0;
  display: flex;
  align-items: flex-start;
  gap: 13px;
  width: 788px;
  max-width: 100%;
  margin: 0 auto;
  overflow: hidden;
}

.posts { flex: 1; padding: 52px 0 0 1px; }

.post {
  display: flex;
  min-height: 211px;
  margin-bottom: 6px;
  border: 1px solid #dedede;
  border-radius: 2px;
  background: #fefefe;
}
.post + .post { min-height: 260px; }

.user {
  flex: none;
  width: 108px;
  padding: 7px 8px 7px 7px;
  border-right: 1px solid #dedede;
  background: #f5f5f5;
  display: flex;
  flex-direction: column;
  align-items: center;
  position: relative;
}
.user::after {
  content: "";
  position: absolute;
  top: 18px;
  right: -5px;
  width: 8px;
  height: 8px;
  border: 1px solid #dedede;
  border-width: 0 0 1px 1px;
  background: #fefefe;
  transform: rotate(45deg);
}
.avatar { width: 64px; height: 64px; }
.avatar-letter { font-family: "Liberation Sans", sans-serif; font-size: 38px; fill: #93d94e; }
.username { margin-top: 5px; font-family: "Open Sans", sans-serif; font-size: 10px; line-height: 14px; font-weight: 700; }
.rank { font-size: 8px; line-height: 12px; }
.badge-icon { width: 12px; height: 14px; margin: 2px 0 3px; }
.user dl { align-self: stretch; margin-top: 1px; font-size: 8px; line-height: 11px; }
.user dl div { display: flex; justify-content: space-between; }
.user dt { color: #8a8a8a; }

.message { flex: 1; min-width: 0; padding: 7px; }

.message-head {
  display: flex;
  justify-content: space-between;
  height: 14px;
  border-bottom: 1px solid #ebebeb;
  font-size: 8px;
  line-height: 12px;
  color: #8a8a8a;
}
.message-head span { display: flex; align-items: center; gap: 8px; }
.message-head svg { width: 8px; height: 8px; }
.message-head a { color: #8a8a8a; }

blockquote {
  margin-top: 7px;
  padding: 5px 7px;
  border: 1px solid #e8e8e8;
  border-left: 2px solid #e59b3f;
  background: linear-gradient(#fafafa, #f3f3f3 24px);
  font-size: 9px;
  line-height: 12px;
}
.quote-author { display: flex; align-items: center; gap: 5px; color: #e0913c; }
.quote-author svg { width: 9px; height: 9px; }
blockquote p { margin-top: 10px; }

.message-text { margin-top: 5px; font-size: 10px; line-height: 14px; }
.message-text.spaced { margin-top: 18px; }

.actions { display: flex; justify-content: flex-end; gap: 10px; margin-top: 10px; font-size: 9px; line-height: 12px; }
.actions a { display: flex; align-items: center; gap: 3px; }
.actions svg { width: 10px; height: 9px; }
.actions .tag { gap: 2px; }

.reactions {
  display: flex;
  align-items: center;
  gap: 3px;
  height: 23px;
  margin-top: 9px;
  padding: 0 6px;
  border: 1px solid #e8e8e8;
  border-left: 2px solid #4da6dc;
  background: #f5f5f5;
  font-size: 8px;
}
.reactions svg { width: 9px; height: 9px; }

.votes {
  flex: none;
  width: 45px;
  padding-top: 7px;
  border-left: 1px solid #dedede;
  background: #f6f6f6;
  display: flex;
  flex-direction: column;
  align-items: center;
  gap: 5px;
  color: #888;
}
.votes button { display: flex; color: #dcdcdc; }
.votes span { font-family: "Open Sans", sans-serif; font-size: 15px; line-height: 20px; padding: 3px 0; }

.sidebar { flex: none; width: 201px; }
.widget {
  height: 12px;
  padding-left: 28px;
  border: 1px solid #e2e2e2;
  border-width: 0 1px;
  background: #fefefe;
  font-size: 9px;
  line-height: 12px;
}
.widget a { color: #777; }
.icicles { display: block; width: 100%; height: 18px; }

/* cookie notice */
.cookies {
  flex: none;
  padding: 11px 0 14px;
  border: 1px solid #dcdcdc;
  border-bottom-color: #c5ccd2;
  background: #edf6fe;
}
.cookies-inner { display: flex; width: 788px; max-width: 100%; margin: 0 auto; }
.cookies-text { flex: 1; font-size: 10px; line-height: 14px; }
.cookies h2 { font-family: "Open Sans", sans-serif; font-size: 14px; line-height: 20px; color: #111; }
.cookies p { margin-top: 10px; }
.cookies a { color: #4b86ab; }
.cookies-buttons {
  width: 201px;
  padding-top: 24px;
  display: flex;
  flex-direction: column;
  gap: 8px;
}
.cookies-buttons button { height: 21px; border-radius: 2px; font-size: 9px; font-weight: 700; }
.cookies-buttons .accept { background: #49aae3; color: #fff; }
.cookies-buttons .reject { background: #fff; border: 1px solid #d5dde4; color: #1b5a87; }

/* overlays */
.snow { position: absolute; top: 0; left: 0; width: 100%; height: 100%; z-index: 2; pointer-events: none; }
.watermark {
  position: absolute;
  right: 8px;
  top: 349px;
  display: flex;
  align-items: center;
  gap: 2px;
  font-family: "DejaVu Serif", serif;
  font-size: 12px;
  font-weight: 700;
  color: #fafafa;
}
.watermark svg { width: 24px; height: 24px; }

.scrollbar { flex: none; width: 10px; display: flex; flex-direction: column; align-items: center; padding: 4px 0; background: #fbfbfb; }
.scroll-up, .scroll-down { border: 3px solid transparent; }
.scroll-up { border-top: 0; border-bottom: 4px solid #777; }
.scroll-down { border-bottom: 0; border-top: 4px solid #777; }
.space-above { flex: 349; }
.thumb { flex: 87; width: 6px; border-radius: 3px; background: #888; }
.space-below { flex: 167; }

/* taskbar */
.taskbar { flex: none; display: flex; height: 20px; background: #020303; border-top: 1px solid #222; color: #eee; }
.apps { flex: 0 0 29%; display: flex; }
.apps button { flex: 1; display: flex; align-items: center; justify-content: center; margin: 0 2px; border-bottom: 2px solid transparent; }
.apps svg { width: 11px; height: 11px; }
.apps .running { border-bottom-color: #e5dede; }
.tray { flex: 1; display: flex; justify-content: flex-end; align-items: center; gap: 5px; padding-right: 16px; }
.tray svg { width: 11px; height: 11px; }
.tray time { margin: 0 5px 0 2px; font-size: 8px; }
```
